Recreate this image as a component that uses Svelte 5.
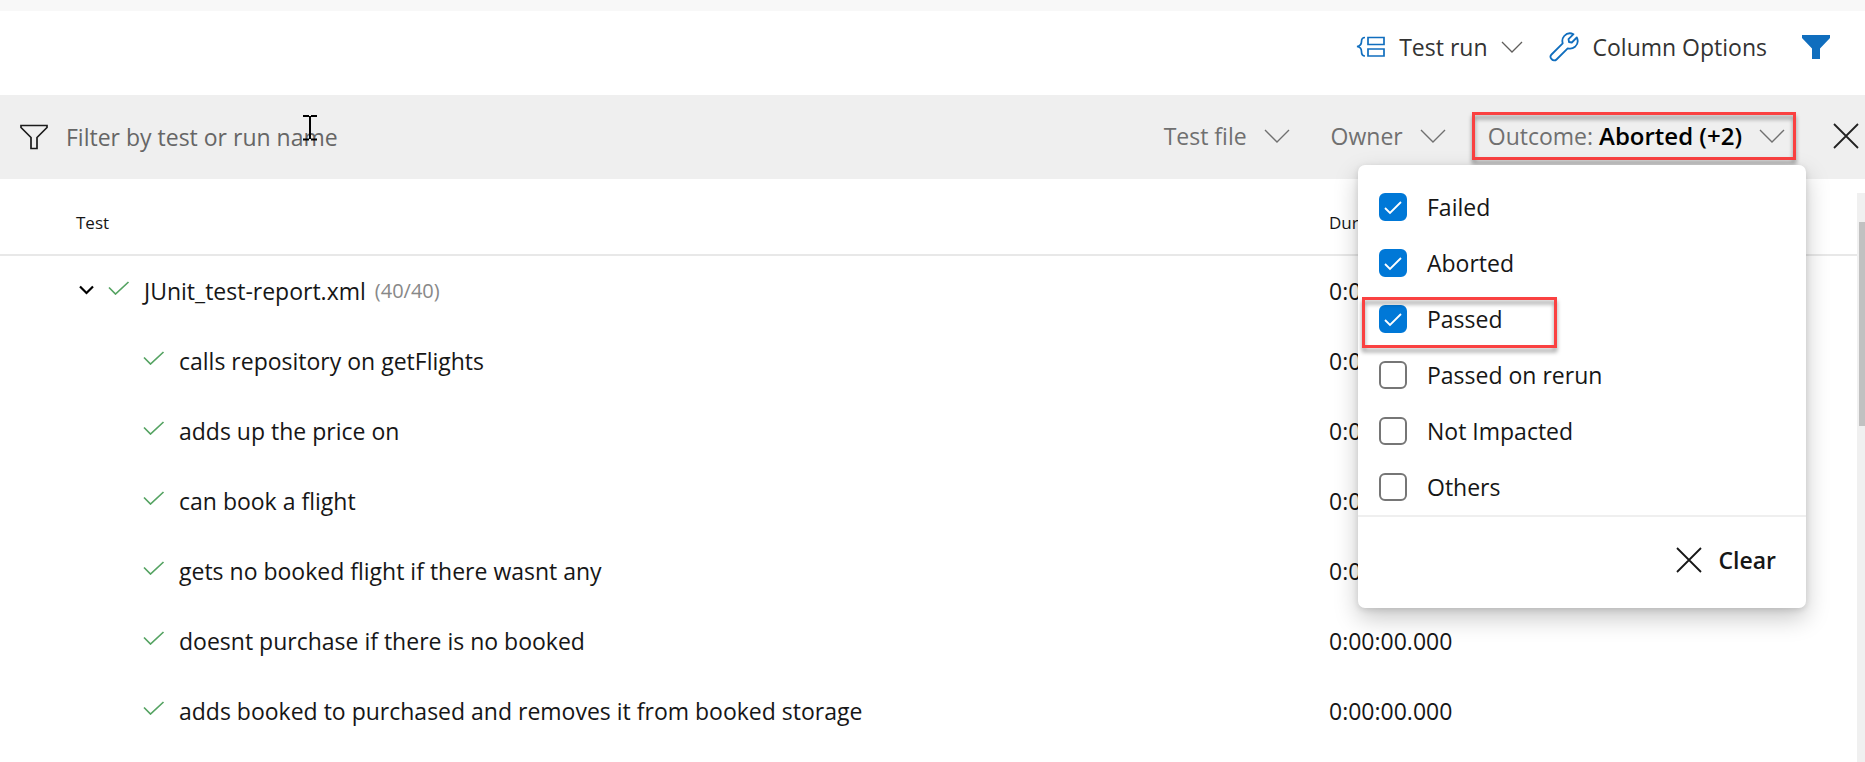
<script>
  let outcomes = $state([
    { name: 'Failed', checked: true },
    { name: 'Aborted', checked: true },
    { name: 'Passed', checked: true, marked: true },
    { name: 'Passed on rerun', checked: false },
    { name: 'Not Impacted', checked: false },
    { name: 'Others', checked: false }
  ]);
  let query = $state('');

  const tests = [
    'calls repository on getFlights',
    'adds up the price on',
    'can book a flight',
    'gets no booked flight if there wasnt any',
    'doesnt purchase if there is no booked',
    'adds booked to purchased and removes it from booked storage'
  ];

  function clear() {
    for (const o of outcomes) o.checked = false;
  }
</script>

{#snippet chevron()}
  <svg class="chevron" width="26" height="14" viewBox="0 0 26 14" aria-hidden="true">
    <path d="M1 1 13 13 25 1" fill="none" stroke="currentColor" stroke-width="1.400" />
  </svg>
{/snippet}

{#snippet tick()}
  <svg class="tick" width="22" height="14" viewBox="0 0 22 14" aria-hidden="true">
    <path d="M1 6.500 7.500 13 20.500 1" fill="none" stroke="#55a362" stroke-width="1.700" />
  </svg>
{/snippet}

{#snippet cross()}
  <svg width="26" height="26" viewBox="0 0 26 26" aria-hidden="true">
    <path d="M1 1 25 25M25 1 1 25" fill="none" stroke="currentColor" stroke-width="1.800" />
  </svg>
{/snippet}

<div class="page">
  <div class="strip"></div>

  <header class="toolbar">
    <button class="group">
      <svg width="30" height="22" viewBox="0 0 30 22" fill="none" stroke="#106ebe" stroke-width="1.700" aria-hidden="true">
        <path d="M9 1.500C6 1.500 5.500 3 5.500 5.500 5.500 8.500 4.500 10 1 10.500 4.500 11 5.500 12.500 5.500 15.500 5.500 18 6 20 9 20" />
        <path d="M12 1.500H28V8.500H12ZM12 13H28V20H12Z" />
      </svg>
      <span>Test run</span>
      <svg width="22" height="12" viewBox="0 0 22 12" aria-hidden="true">
        <path d="M1 1 11 11 21 1" fill="none" stroke="#605e5c" stroke-width="1.300" />
      </svg>
    </button>
    <button class="columns">
      <svg width="30" height="30" viewBox="0 0 30 30" fill="none" stroke="#106ebe" stroke-width="1.800" stroke-linejoin="round" aria-hidden="true">
        <path d="M24.500 2.200 19.500 7.200 20 10 22.800 10.500 27.800 5.500C29.500 9 28.500 12.500 26 14.800 24 16.500 21 17 18.700 16.300L7.500 27.500C4.500 30.500-.5 25.500 2.500 22.500L13.700 11.300C13 9 13.500 6 15.200 4 17.500 1.500 21 .5 24.500 2.200Z" />
      </svg>
      <span>Column Options</span>
    </button>
    <button class="toggle" aria-label="Filter">
      <svg width="28" height="24" viewBox="0 0 28 24" aria-hidden="true">
        <path d="M0 0H28V3L18 13.500V24H10V13.500L0 3Z" fill="#106ebe" />
      </svg>
    </button>
  </header>

  <section class="filters">
    <label class="search">
      <svg width="28" height="26" viewBox="0 0 28 26" aria-hidden="true">
        <path d="M1 1.500H27V3.500L17 13.500V24.500H11V13.500L1 3.500Z" fill="none" stroke="#1b1b1b" stroke-width="1.700" />
      </svg>
      <input type="text" placeholder="Filter by test or run name" aria-label="Filter by test or run name" bind:value={query} />
      <svg class="caret" width="14" height="26" viewBox="0 0 14 26" aria-hidden="true">
        <path d="M0 1H6M8 1H14M7 1V24M0 24.500H6M8 24.500H14" fill="none" stroke="#000" stroke-width="2" />
      </svg>
    </label>
    <button class="drop file"><span>Test file</span>{@render chevron()}</button>
    <button class="drop owner"><span>Owner</span>{@render chevron()}</button>
    <div class="outcome">
      <button class="drop marked"><span>Outcome: <b>Aborted (+2)</b></span>{@render chevron()}</button>
      <div class="menu">
        <ul>
          {#each outcomes as o}
            <li>
              <label class:highlight={o.marked}>
                <input type="checkbox" bind:checked={o.checked} />
                <svg class="mark" width="18" height="14" viewBox="0 0 18 14" aria-hidden="true">
                  <path d="M1 7 6 12 17 1" fill="none" stroke="#fff" stroke-width="1.800" />
                </svg>
                <span>{o.name}</span>
              </label>
            </li>
          {/each}
        </ul>
        <footer>
          <button class="clear" onclick={clear}>{@render cross()}<span>Clear</span></button>
        </footer>
      </div>
    </div>
    <button class="close" aria-label="Close">{@render cross()}</button>
  </section>

  <main>
    <table>
      <thead>
        <tr><th class="name">Test</th><th class="time">Duration</th></tr>
      </thead>
      <tbody>
        <tr>
          <td>
            <div class="cell parent">
              <svg class="expand" width="15" height="10" viewBox="0 0 15 10" aria-hidden="true">
                <path d="M1 1.500 7.500 8 14 1.500" fill="none" stroke="#000" stroke-width="2.200" />
              </svg>
              {@render tick()}
              <span>JUnit_test-report.xml</span>
              <small>(40/40)</small>
            </div>
          </td>
          <td>0:00:00.000</td>
        </tr>
        {#each tests as t}
          <tr>
            <td><div class="cell child">{@render tick()}<span>{t}</span></div></td>
            <td>0:00:00.000</td>
          </tr>
        {/each}
      </tbody>
    </table>
    <div class="scroll"><div class="thumb"></div></div>
  </main>
</div>

<style>
  :global(body) {
    margin: 0;
    background: #fff;
  }
  .page {
    display: flex;
    flex-direction: column;
    min-height: 100vh;
    font: 23px/32px 'Open Sans', 'Noto Sans', sans-serif;
    color: #161616;
  }
  button {
    display: flex;
    align-items: center;
    padding: 0;
    border: 0;
    background: none;
    font: inherit;
    color: inherit;
    white-space: nowrap;
    cursor: pointer;
  }
  svg {
    flex: none;
    display: block;
  }
  .strip {
    height: 11px;
    background: #f8f8f8;
  }
  .toolbar {
    display: flex;
    justify-content: flex-end;
    align-items: center;
    height: 84px;
    padding: 0 35px 13px 0;
    box-sizing: border-box;
    color: #333;
  }
  .group {
    gap: 13px;
    margin-right: 26px;
  }
  .columns {
    gap: 14px;
    margin-right: 35px;
  }
  .filters {
    display: flex;
    align-items: center;
    height: 84px;
    padding: 0 6px 2px 20px;
    box-sizing: border-box;
    background: #efefef;
    color: #707070;
  }
  .search {
    position: relative;
    flex: 1;
    display: flex;
    align-items: center;
    gap: 18px;
    padding-top: 2px;
  }
  .search input {
    flex: 1;
    min-width: 0;
    padding: 0;
    border: 0;
    outline: 0;
    background: none;
    font: inherit;
    color: #161616;
  }
  .search input::placeholder {
    color: #666;
    opacity: 1;
  }
  .caret {
    position: absolute;
    left: 283px;
    top: -4px;
  }
  .drop {
    gap: 17px;
  }
  .file {
    margin-right: 41px;
  }
  .owner {
    margin-right: 26px;
  }
  .outcome {
    position: relative;
    margin-right: 37px;
  }
  .marked {
    position: relative;
    height: 48px;
    padding: 0 11px 0 16px;
  }
  .marked::after {
    content: '';
    position: absolute;
    inset: 0;
    border: 3px solid #fa4141;
    filter: drop-shadow(0 4px 2px rgba(0, 0, 0, 0.4));
  }
  .marked b {
    font-size: 24px;
    font-weight: 600;
    color: #000;
  }
  .close {
    color: #222;
  }
  .menu {
    position: absolute;
    z-index: 2;
    top: 53px;
    right: -10px;
    width: 448px;
    border-radius: 7px;
    background: #fff;
    color: #161616;
    box-shadow: 0 10px 24px rgba(0, 0, 0, 0.22), 0 2px 6px rgba(0, 0, 0, 0.12);
  }
  ul {
    margin: 0;
    padding: 14px 0 0;
    list-style: none;
  }
  li {
    display: flex;
    align-items: center;
    height: 56px;
    padding-left: 21px;
  }
  li label {
    position: relative;
    display: flex;
    align-items: center;
    gap: 20px;
  }
  li input {
    appearance: none;
    flex: none;
    width: 28px;
    height: 28px;
    margin: 0;
    border: 2px solid #767676;
    border-radius: 6px;
    background: #fff;
  }
  li input:checked {
    border-color: #0078d7;
    background: #0078d7;
  }
  .mark {
    position: absolute;
    left: 5px;
    top: 10px;
  }
  .highlight::after {
    content: '';
    position: absolute;
    left: -17px;
    top: -6px;
    width: 189px;
    height: 45px;
    border: 3px solid #fa4141;
    filter: drop-shadow(0 4px 2px rgba(0, 0, 0, 0.4));
  }
  footer {
    display: flex;
    justify-content: flex-end;
    padding: 27px 30px 32px;
    border-top: 2px solid #efefef;
  }
  .clear {
    gap: 16px;
    font-weight: 600;
  }
  main {
    flex: 1;
    display: flex;
  }
  table {
    flex: 1;
    align-self: flex-start;
    border-spacing: 0;
    table-layout: fixed;
    width: 100%;
  }
  th {
    height: 77px;
    padding: 12px 0 0;
    box-sizing: border-box;
    border-bottom: 2px solid #e8e8e8;
    font-size: 17px;
    font-weight: 400;
    text-align: left;
  }
  .name {
    padding-left: 76px;
  }
  .time {
    width: 528px;
  }
  td {
    height: 70px;
    padding: 0;
  }
  .cell {
    display: flex;
    align-items: center;
  }
  .parent {
    padding-left: 79px;
  }
  .child {
    padding-left: 143px;
  }
  .tick {
    margin: 0 14px 6px 0;
  }
  .expand {
    margin: 0 14px 2px 0;
  }
  small {
    margin-left: 9px;
    font-size: 20px;
    color: #888;
  }
  .scroll {
    width: 8px;
    margin-top: 14px;
    padding-top: 29px;
    box-sizing: border-box;
    background: #f0f0f0;
  }
  .thumb {
    height: 204px;
    margin-left: 2px;
    background: #c1c1c1;
  }
</style>
